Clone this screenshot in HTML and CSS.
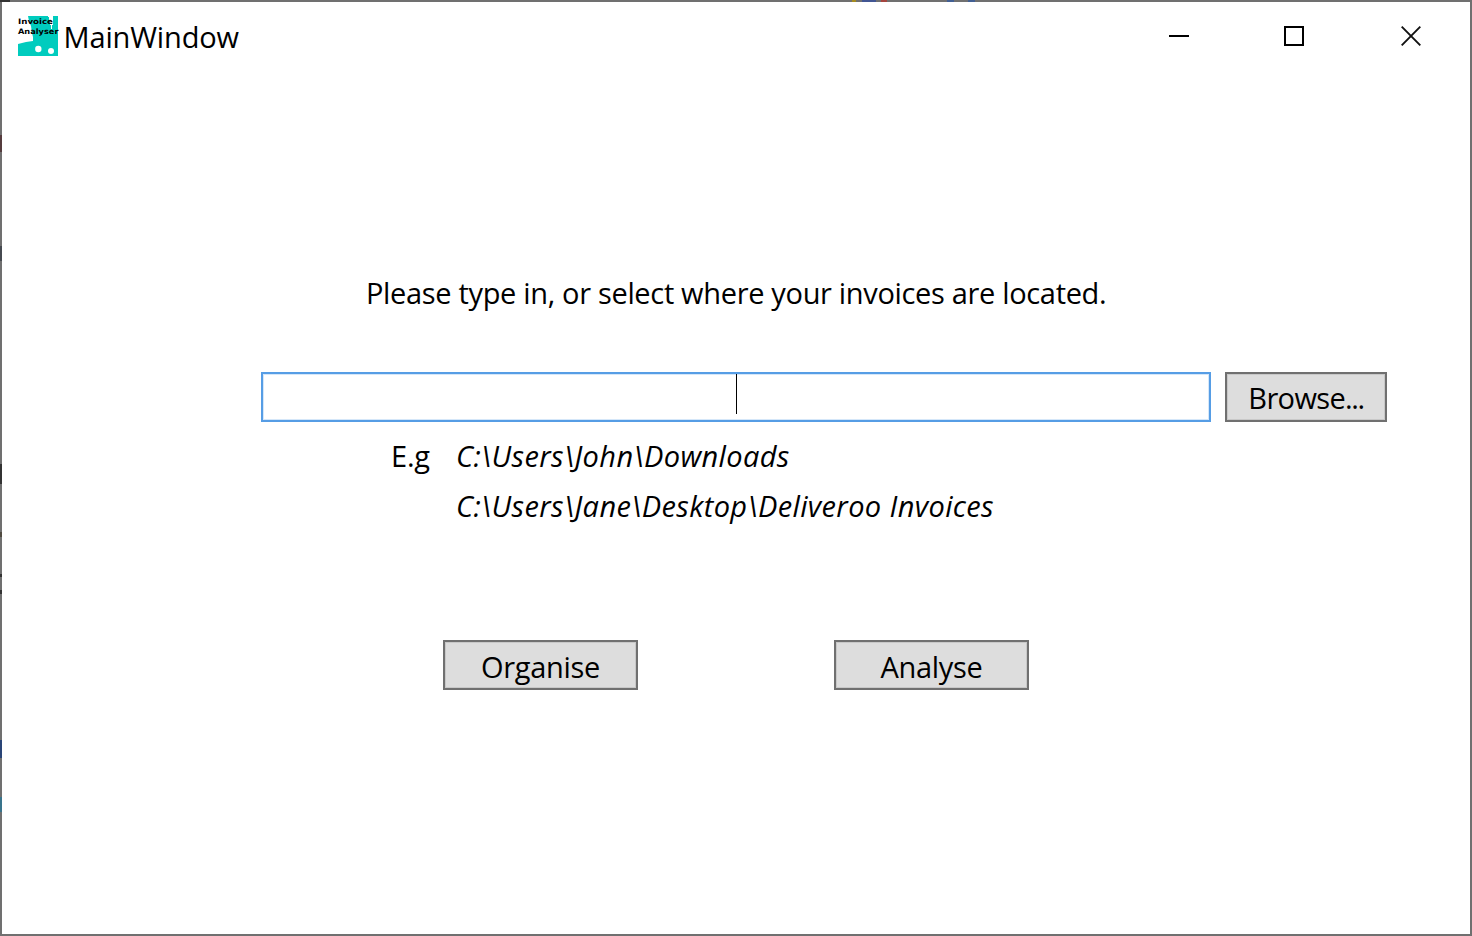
FILE: index.html
```html
<!DOCTYPE html>
<html lang="en">
<head>
<meta charset="utf-8">
<title>MainWindow</title>
<link rel="stylesheet" href="styles.css">
</head>
<body>
<div class="window">
  <header class="titlebar">
    <svg class="app-icon" width="41" height="40" viewBox="0 0 41 40">
      <path fill="#00ccbe" d="M10 0H30V1H31V4H32V9H33V13H34V9H35V0H40V40H0V28L4 27L8 26L15 25V21L14 17L13 10L11 5Z"/>
      <circle cx="20.3" cy="33" r="3.2" fill="#fff"/>
      <circle cx="33" cy="35" r="3" fill="#fff"/>
      <text class="icon-text" x="0" y="8" textLength="35" lengthAdjust="spacingAndGlyphs">Invoice</text>
      <text class="icon-text" x="0" y="18" textLength="40.5" lengthAdjust="spacingAndGlyphs">Analyser</text>
    </svg>
    <span class="title">MainWindow</span>
    <div class="controls">
      <svg width="20" height="20" viewBox="0 0 20 20"><path d="M0 10H20" stroke="#000" stroke-width="2"/></svg>
      <svg width="20" height="20" viewBox="0 0 20 20"><path d="M1 1H19V19H1Z" fill="none" stroke="#000" stroke-width="2"/></svg>
      <svg class="close" width="20" height="20" viewBox="0 0 20 20"><path d="M.7 .7L19.3 19.3M19.3 .7L.7 19.3" stroke="#111" stroke-width="1.9"/></svg>
    </div>
  </header>
  <main>
    <p class="prompt">Please type in, or select where your invoices are located.</p>
    <div class="path-row">
      <div class="field"><span class="caret"></span></div>
      <button class="browse">Browse<span class="dots">...</span></button>
    </div>
    <div class="examples">
      <span class="eg">E.g</span>
      <div class="paths">
        <em>C:\Users\John\Downloads</em>
        <em>C:\Users\Jane\Desktop\Deliveroo Invoices</em>
      </div>
    </div>
    <div class="actions">
      <button class="action">Organise</button>
      <button class="action">Analyse</button>
    </div>
  </main>
</div>
</body>
</html>
```
FILE: styles.css
```css
* { box-sizing: border-box; }
body { margin: 0; background: #fff; overflow: hidden; }
.window {
  position: relative;
  width: 1472px; height: 936px;
  border: 2px solid #707070;
  background: #fff; color: #000;
  font: 29px/40px "Open Sans", "Noto Sans", sans-serif;
}
.window::before, .window::after { content: ""; position: absolute; left: -2px; top: -2px; }
.window::before {
  width: 2px; height: 936px;
  background: linear-gradient(#0000 135px, #553c3e 135px 152px, #0000 152px 246px, #464a50 246px 261px, #0000 261px 464px, #333 464px 484px, #0000 484px 532px, #504a40 532px 537px, #0000 537px 574px, #333 574px 577px, #0000 577px 590px, #333 590px 594px, #0000 594px 740px, #2a4577 740px 758px, #0000 758px 797px, #39748c 797px 812px, #0000 812px);
}
.window::after {
  width: 1472px; height: 2px;
  background: linear-gradient(90deg, #333 10px, #0000 10px 852px, #a58b20 852px 856px, #0000 856px 862px, #425693 862px 876px, #0000 876px 881px, #a5453f 881px 887px, #0000 887px 947px, #425f93 947px 954px, #0000 954px 968px, #425f93 968px 975px, #0000 975px);
}
.titlebar { display: flex; height: 68px; padding: 14px 0 0 16px; }
.app-icon { flex: none; overflow: visible; }
.icon-text { font: bold 7.5px "DejaVu Sans", sans-serif; }
.title { margin: 1px 0 0 4.5px; letter-spacing: -.15px; }
.controls { display: flex; gap: 95px; margin: 10px 49px 0 auto; }
.close { margin-left: 2px; }
main { display: flex; flex-direction: column; }
.prompt { margin: 203px 0 0 364px; height: 40px; white-space: nowrap; letter-spacing: -.33px; }
.path-row { display: flex; gap: 14px; margin: 59px 0 0 259px; }
.field {
  display: flex; justify-content: center;
  width: 950px; height: 50px;
  border: 2px solid #569de5; box-shadow: inset 0 0 0 1px #d5e7f9;
}
.caret { width: 1px; height: 40px; margin: 0 0 0 1px; background: #000; }
button {
  height: 50px; padding: 3px 0 0;
  border: 2px solid #707070; border-radius: 0;
  background: #ddd; color: #000;
  box-shadow: inset 0 0 0 1px #c8c8c8;
  font: inherit; letter-spacing: -.33px; text-align: center; white-space: nowrap;
}
.browse { width: 162px; padding: 1px 0 0; letter-spacing: -.65px; }
.dots { letter-spacing: -1.4px; }
.examples { display: flex; height: 100px; margin: 14px 0 0 389px; }
.eg { width: 65px; letter-spacing: -.2px; }
.paths { display: flex; flex-direction: column; gap: 10px; white-space: nowrap; letter-spacing: .36px; }
.actions { display: flex; gap: 196px; margin: 104px 0 0 441px; }
.action { width: 195px; }
```
